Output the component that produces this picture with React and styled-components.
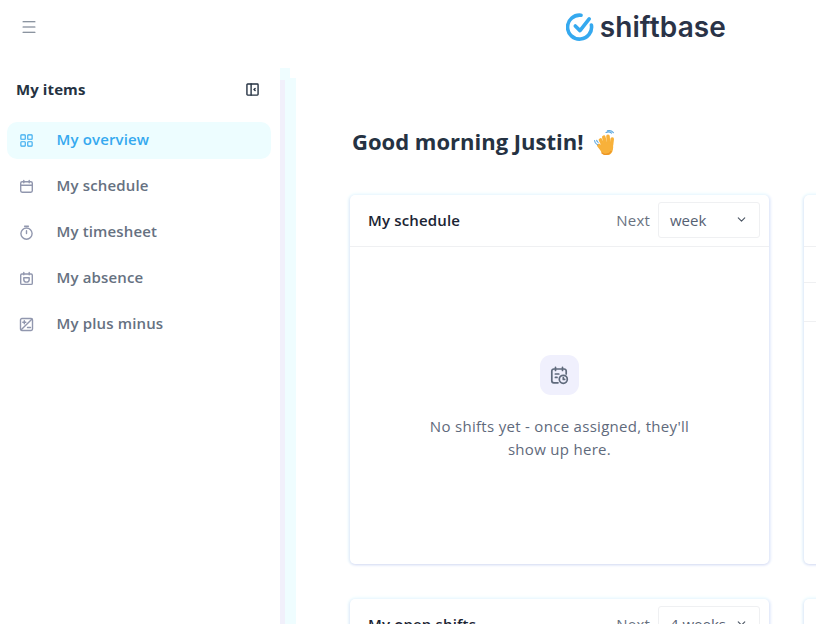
import React from "react";
import styled, { createGlobalStyle } from "styled-components";
import { ChevronDown, LayoutGrid, Menu } from "lucide-react";

const GlobalStyle = createGlobalStyle`
  html, body {
    margin: 0;
    height: 100%;
    overflow: hidden;
    background: #fff;
  }
  body {
    font-family: "Open Sans", "Noto Sans", sans-serif;
    color: #253242;
  }
  * {
    box-sizing: border-box;
  }
`;

const Page = styled.div`
  width: 816px;
  height: 624px;
  overflow: hidden;
  display: flex;
  flex-direction: column;
`;

const TopBar = styled.header`
  height: 68px;
  flex: none;
  display: grid;
  grid-template-columns: 1fr auto 90px;
  align-items: center;
  padding-left: 20px;
`;

const MenuButton = styled.button`
  width: 18px;
  height: 18px;
  padding: 0;
  margin-top: -14px;
  border: 0;
  background: none;
  color: #667181;
  display: flex;
`;

const Logo = styled.div`
  display: flex;
  align-items: center;
  gap: 6px;
  margin-top: -14px;
`;

const LogoText = styled.span`
  font-family: Inter, "Open Sans", sans-serif;
  font-size: 28px;
  font-weight: 600;
  letter-spacing: 0.1px;
  line-height: 1;
  color: #2a3347;
`;

const Body = styled.div`
  flex: 1;
  display: flex;
  min-height: 0;
`;

const Sidebar = styled.aside`
  width: 280px;
  flex: none;
  padding: 10px 9px 0 7px;
`;

const SidebarHead = styled.div`
  height: 22px;
  padding: 0 12px 0 9px;
  display: flex;
  justify-content: space-between;
  align-items: center;
  margin-bottom: 22px;
`;

const SidebarTitle = styled.h2`
  margin: 0;
  font-size: 15px;
  font-weight: 700;
  letter-spacing: 0.1px;
  color: #253242;
`;

const NavList = styled.nav`
  display: flex;
  flex-direction: column;
  gap: 9px;
`;

const NavItem = styled.a`
  height: 37px;
  display: flex;
  align-items: center;
  gap: 22.5px;
  padding: 0 0 3px 12px;
  border-radius: 10px;
  font-size: 15px;
  font-weight: 600;
  letter-spacing: 0.15px;
  color: ${({ $active }) => ($active ? "#35a9ef" : "#667181")};
  background: ${({ $active }) => ($active ? "#edfdff" : "transparent")};
`;

const NavIcon = styled.span`
  width: 15px;
  height: 15px;
  display: flex;
  margin-top: 2px;
  color: ${({ $active }) => ($active ? "#35a9ef" : "#9197ae")};
`;

const SideEdge = styled.div`
  width: 16px;
  flex: none;
  background:
    linear-gradient(#f1f0fb, #f1f0fb) 0 12px / 5px 100% no-repeat,
    linear-gradient(#effdff, #effdff) 0 0 / 10px 100% no-repeat,
    linear-gradient(#effdff, #effdff) 10px 10px / 6px 100% no-repeat;
`;

const Main = styled.main`
  flex: 1;
  min-width: 0;
  padding: 0 0 0 54px;
`;

const Greeting = styled.h1`
  margin: 56px 0 37px 2px;
  height: 34px;
  display: flex;
  align-items: center;
  gap: 9px;
  font-size: 22px;
  line-height: 34px;
  font-weight: 700;
  color: #253242;
  white-space: nowrap;
`;

const CardGrid = styled.div`
  display: grid;
  grid-template-columns: 419px 419px;
  grid-auto-rows: 369px;
  column-gap: 35px;
  row-gap: 35px;
`;

const Card = styled.section`
  background: #fff;
  border-radius: 5px;
  display: flex;
  flex-direction: column;
  box-shadow: 0 1px 3px #d5daf3, 0 -2px 3px #f1fdff, -2px 0 3px #eefafd, 2px 0 3px #eaf0fd;
`;

const CardHead = styled.div`
  height: 52px;
  flex: none;
  padding: 0 9px 2px 18px;
  display: flex;
  align-items: center;
  border-bottom: 1px solid #eff0f2;
`;

const CardTitle = styled.h3`
  margin: 0;
  flex: 1;
  font-size: 15px;
  font-weight: 600;
  letter-spacing: 0.15px;
  color: #1b2433;
`;

const NextLabel = styled.span`
  font-size: 15px;
  letter-spacing: 0.2px;
  color: #69727f;
  margin-right: 8px;
`;

const Select = styled.div`
  width: 102px;
  height: 36px;
  padding: 0 11px;
  display: flex;
  align-items: center;
  justify-content: space-between;
  border: 1px solid #eff0f2;
  border-radius: 3px;
  font-size: 15px;
  color: #566173;
`;

const Empty = styled.div`
  flex: 1;
  display: flex;
  flex-direction: column;
  align-items: center;
  padding-top: 108px;
`;

const EmptyIcon = styled.div`
  width: 39px;
  height: 40px;
  border-radius: 11px;
  background: #f0f0fd;
  color: #5f6a7c;
  display: flex;
  align-items: center;
  justify-content: center;
`;

const EmptyText = styled.p`
  width: 280px;
  margin: 20px 0 0;
  text-align: center;
  font-size: 15px;
  line-height: 23px;
  letter-spacing: 0.3px;
  color: #5f6a7c;
`;

const Row = styled.div`
  height: ${({ $height }) => $height}px;
  flex: none;
  border-bottom: 1px solid #eff0f2;
`;

const Stroke = styled.svg`
  width: ${({ $size }) => $size}px;
  height: ${({ $size }) => $size}px;
  fill: none;
  stroke: currentColor;
  stroke-width: ${({ $weight }) => $weight || 1.4};
  stroke-linecap: round;
  stroke-linejoin: round;
`;

const CollapseIcon = () => (
  <Stroke $size={13} $weight={1.5} viewBox="0 0 14 14" style={{ color: "#253242" }}>
    <rect x="1" y="1" width="12" height="12" rx="0.8" />
    <path d="M5.500 1v12M9.800 5.800 8.600 7l1.200 1.200" />
  </Stroke>
);

const CalendarIcon = () => (
  <Stroke $size={15} viewBox="0 0 15 15">
    <rect x="1.700" y="2.800" width="11.600" height="10.400" rx="1.400" />
    <path d="M1.700 6.200h11.600M4.800 1.500v2.200M10.200 1.500v2.200" />
  </Stroke>
);

const TimerIcon = () => (
  <Stroke $size={15} viewBox="0 0 15 15">
    <circle cx="7.500" cy="8.600" r="5.600" />
    <path d="M5.600 1.200h3.800M7.500 5.800v2.800" />
  </Stroke>
);

const AbsenceIcon = () => (
  <Stroke $size={15} viewBox="0 0 15 15">
    <rect x="1.700" y="3" width="11.600" height="10.400" rx="1.200" />
    <path d="M4.800 1.500v2.200M10.200 1.500v2.200" />
    <path d="M4.800 6.800h5.400v1.600a2.700 2.700 0 0 1-5.400 0Z" />
  </Stroke>
);

const PlusMinusIcon = () => (
  <Stroke $size={15} viewBox="0 0 15 15">
    <rect x="1.500" y="1.500" width="12" height="12" rx="1.400" />
    <path d="M2.200 12.800 12.800 2.200M3.800 5.200h3M5.300 3.700v3M8.500 10.500h3" />
  </Stroke>
);

const CalendarClockIcon = () => (
  <Stroke $size={19} $weight={1.7} viewBox="0 0 19 19">
    <path d="M8 16.800H3.800a2 2 0 0 1-2-2V5a2 2 0 0 1 2-2h10.400a2 2 0 0 1 2 2v3" />
    <path d="M5.500 1.400v3M12.500 1.400v3M5.400 8h3.400M5.400 11.400h1.600" />
    <circle cx="13.300" cy="13.300" r="4" />
    <path d="M13.300 11.600v1.800h1.400" />
  </Stroke>
);

const LogoMark = () => (
  <svg width="28" height="28" viewBox="0 0 28 28" fill="none" stroke="#35a9ef" strokeLinecap="round" strokeWidth="3.600">
    <path d="M15 2.200A12 12 0 1 0 25.400 12" />
    <path d="M9.300 13 14 17.600 23.200 5.800" strokeLinejoin="round" />
  </svg>
);

const WaveIcon = () => (
  <svg width="25" height="27" viewBox="0 -2 25 27" fill="none" strokeLinecap="round">
    <g stroke="#f8b13a" strokeWidth="3.600">
      <path d="M10 15 7.500 10" />
      <path d="M12.500 14 10.800 7.200" />
      <path d="M15.500 14 15 6.400" />
      <path d="M18.500 15 19.200 9" />
      <path d="M8.500 19 5.800 15.400" />
    </g>
    <path
      d="M7 17c0-3 2-5 6.500-5 4 0 6.700 1.500 6.700 5 0 4.500-2.200 8.500-6.700 8.500-3.500 0-6.500-3.500-6.500-8.500Z"
      fill="#f8b13a"
    />
    <path d="M9 23c2.500 2 7 2 9-1.500" stroke="#ec9526" strokeWidth="1.400" />
    <path d="M1.500 10.500c.2 2 1.200 3.400 3 4.300M3.600 10.200c.2 1 .7 1.700 1.500 2.200" stroke="#5aa7e0" strokeWidth="1.100" />
    <path d="M13 2.400c2-.9 4-.6 5.600.8M14.400 .8c2.800-.8 4.600.2 6 1.800" stroke="#5aa7e0" strokeWidth="1.100" />
  </svg>
);

const navItems = [
  { label: "My overview", icon: <LayoutGrid size={15} strokeWidth={1.8} />, active: true },
  { label: "My schedule", icon: <CalendarIcon /> },
  { label: "My timesheet", icon: <TimerIcon /> },
  { label: "My absence", icon: <AbsenceIcon /> },
  { label: "My plus minus", icon: <PlusMinusIcon /> },
];

const Range = ({ value }) => (
  <>
    <NextLabel>Next</NextLabel>
    <Select>
      {value}
      <ChevronDown size={13} strokeWidth={2} color="#4b5563" />
    </Select>
  </>
);

const App = () => (
  <Page>
    <GlobalStyle />
    <TopBar>
      <MenuButton aria-label="Menu">
        <Menu size={18} strokeWidth={1.4} />
      </MenuButton>
      <Logo>
        <LogoMark />
        <LogoText>shiftbase</LogoText>
      </Logo>
    </TopBar>
    <Body>
      <Sidebar>
        <SidebarHead>
          <SidebarTitle>My items</SidebarTitle>
          <CollapseIcon />
        </SidebarHead>
        <NavList>
          {navItems.map((item) => (
            <NavItem key={item.label} $active={item.active}>
              <NavIcon $active={item.active}>{item.icon}</NavIcon>
              {item.label}
            </NavItem>
          ))}
        </NavList>
      </Sidebar>
      <SideEdge />
      <Main>
        <Greeting>
          Good morning Justin!
          <WaveIcon />
        </Greeting>
        <CardGrid>
          <Card>
            <CardHead>
              <CardTitle>My schedule</CardTitle>
              <Range value="week" />
            </CardHead>
            <Empty>
              <EmptyIcon>
                <CalendarClockIcon />
              </EmptyIcon>
              <EmptyText>No shifts yet - once assigned, they'll show up here.</EmptyText>
            </Empty>
          </Card>
          <Card>
            <Row $height={52} />
            <Row $height={36} />
            <Row $height={39} />
          </Card>
          <Card>
            <CardHead>
              <CardTitle>My open shifts</CardTitle>
              <Range value="4 weeks" />
            </CardHead>
          </Card>
          <Card />
        </CardGrid>
      </Main>
    </Body>
  </Page>
);

export default App;
